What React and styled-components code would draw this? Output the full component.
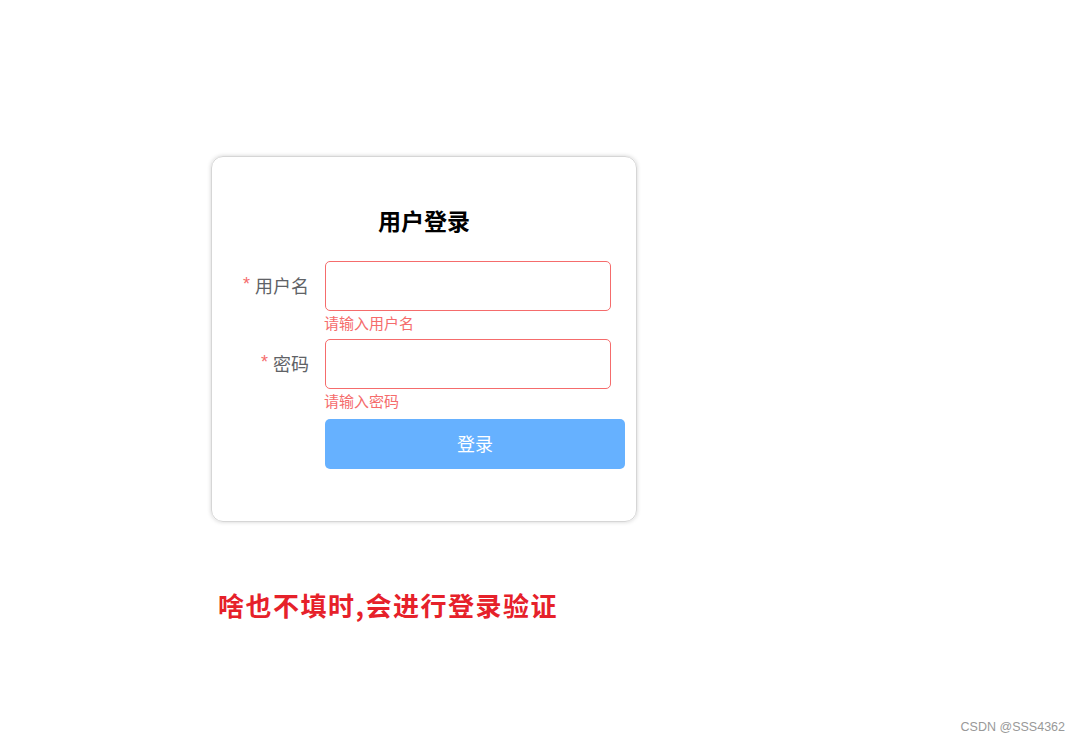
import styled, { createGlobalStyle } from "styled-components";

const GlobalStyle = createGlobalStyle`
  html, body {
    margin: 0;
    padding: 0;
    background: #fff;
    font-family: "Liberation Sans", "Noto Sans CJK SC", sans-serif;
  }
`;

const Page = styled.div`
  height: 741px;
  display: flex;
  flex-direction: column;
  padding: 156px 0 0 211px;
  box-sizing: border-box;
`;

const Card = styled.div`
  width: 426px;
  box-sizing: border-box;
  border: 1px solid #d6d6d6;
  border-radius: 12px;
  box-shadow: 0 0 4px rgba(0, 0, 0, 0.18);
  padding: 48px 0 52px 13px;
`;

const Title = styled.h2`
  margin: 0 0 26px -13px;
  font-size: 23px;
  line-height: 30px;
  font-weight: 700;
  text-align: center;
  color: #000;
  font-family: "Noto Sans CJK SC", sans-serif;
`;

const FormItem = styled.div`
  display: grid;
  grid-template-columns: 100px 1fr;
  margin-bottom: ${(p) => p.$gap || 0}px;
`;

const Label = styled.label`
  display: flex;
  align-items: center;
  justify-content: flex-end;
  height: 50px;
  box-sizing: border-box;
  padding: 0 16px 3px 0;
  font-size: 18px;
  color: #606266;
  font-family: "Noto Sans CJK SC", sans-serif;

  &::before {
    content: "*";
    color: #f56c6c;
    margin-right: 5px;
    font-family: "Liberation Sans", sans-serif;
  }
`;

const Field = styled.div`
  display: flex;
  flex-direction: column;
`;

const Input = styled.input`
  width: 286px;
  height: 50px;
  box-sizing: border-box;
  border: 1px solid #f56c6c;
  border-radius: 5px;
  padding: 0 15px;
  outline: none;
  font-size: 17px;
`;

const Error = styled.div`
  height: 28px;
  line-height: 24px;
  font-size: 15px;
  color: #f56c6c;
  margin-left: -1px;
  font-family: "Noto Sans CJK SC", sans-serif;
`;

const Button = styled.button`
  grid-column: 2;
  width: 300px;
  height: 50px;
  border: none;
  border-radius: 5px;
  padding: 0 0 3px;
  background: #66b1ff;
  color: #fff;
  font-size: 18px;
  font-family: "Noto Sans CJK SC", sans-serif;
  cursor: pointer;
`;

const Note = styled.p`
  margin: 70px 0 0 7px;
  font-size: 26px;
  line-height: 26px;
  font-weight: 700;
  color: #e6212a;
  font-family: "Noto Sans CJK SC", sans-serif;
  letter-spacing: 1.5px;
`;

const Watermark = styled.div`
  margin-top: auto;
  align-self: flex-end;
  padding: 0 15px 7px 0;
  font-size: 12.5px;
  color: #999;
  font-family: "Liberation Sans", sans-serif;
`;

const fields = [
  { label: "用户名", error: "请输入用户名", type: "text" },
  { label: "密码", error: "请输入密码", type: "password" },
];

export default function App() {
  return (
    <>
      <GlobalStyle />
      <Page>
        <Card>
          <Title>用户登录</Title>
          {fields.map((f, i) => (
            <FormItem key={f.label} $gap={i === fields.length - 1 ? 2 : 0}>
              <Label>{f.label}</Label>
              <Field>
                <Input type={f.type} />
                <Error>{f.error}</Error>
              </Field>
            </FormItem>
          ))}
          <FormItem>
            <Button>登录</Button>
          </FormItem>
        </Card>
        <Note>啥也不填时,会进行登录验证</Note>
        <Watermark>CSDN @SSS4362</Watermark>
      </Page>
    </>
  );
}
